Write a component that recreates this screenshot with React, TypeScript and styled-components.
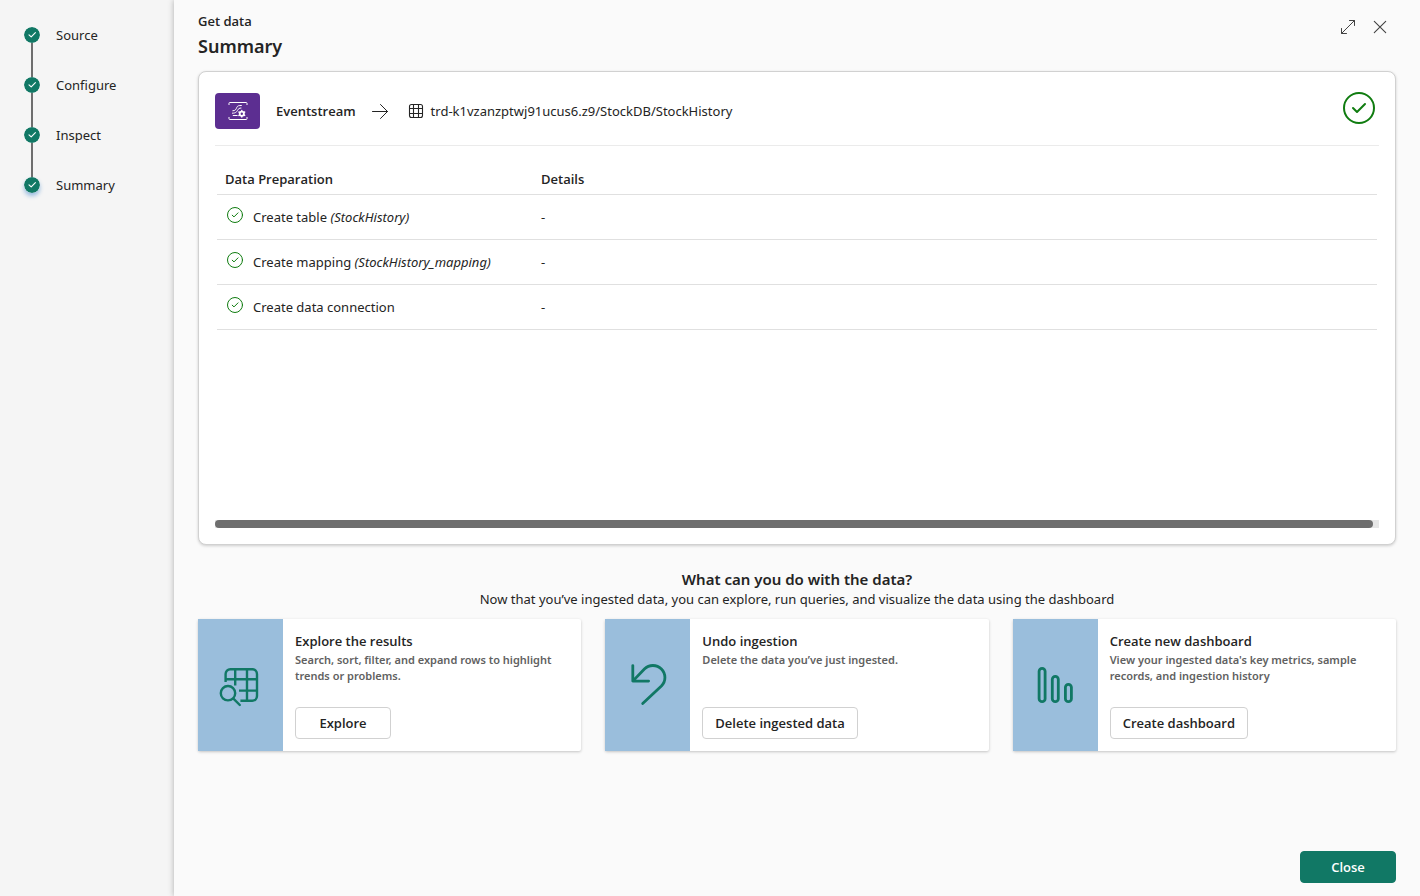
import React from "react";
import styled, { createGlobalStyle } from "styled-components";

const color = {
  text: "#242424",
  muted: "#616161",
  brand: "#117865",
  success: "#107c10",
  line: "#e0e0e0",
  panel: "#9abedc",
};

const bodyFont = `"Noto Sans", "Open Sans", sans-serif`;
const strongFont = `"Open Sans", "Noto Sans", sans-serif`;

const GlobalStyle = createGlobalStyle`
  *, *::before, *::after { box-sizing: border-box; }
  body {
    margin: 0;
    background: #fafafa;
    color: ${color.text};
    font-family: ${bodyFont};
    font-size: 13px;
    line-height: 20px;
  }
  h1, h2, h3, p, ol { margin: 0; padding: 0; }
  svg { display: block; flex: none; fill: none; stroke-linecap: round; stroke-linejoin: round; }
`;

const Page = styled.div`
  display: flex;
  min-height: 100vh;
`;

const Sidebar = styled.nav`
  flex: none;
  width: 174px;
  padding: 25px 24px;
  background: #f5f5f5;
`;

const Steps = styled.ol`
  display: flex;
  flex-direction: column;
  gap: 30px;
  list-style: none;
`;

const Step = styled.li<{ $current?: boolean }>`
  position: relative;
  display: flex;
  align-items: center;
  gap: 16px;

  svg {
    border-radius: 50%;
    box-shadow: ${(p) => (p.$current ? "0 3px 4px rgba(40, 120, 200, 0.45)" : "none")};
  }

  &:not(:last-child)::after {
    content: "";
    position: absolute;
    top: 18px;
    left: 7px;
    width: 2px;
    height: 34px;
    background: #6e6e6e;
  }
`;

const Main = styled.main`
  flex: 1;
  min-width: 0;
  display: flex;
  flex-direction: column;
  padding: 11px 24px 13px;
  background: #fafafa;
  box-shadow: 0 0 6px rgba(0, 0, 0, 0.3);
`;

const Header = styled.header`
  display: flex;
  justify-content: space-between;
  align-items: flex-start;
  height: 60px;
`;

const Eyebrow = styled.p`
  font-family: ${strongFont};
  font-weight: 600;
`;

const Title = styled.h1`
  font-size: 18px;
  line-height: 30px;
  font-weight: 600;
`;

const HeaderActions = styled.div`
  display: flex;
`;

const IconButton = styled.button`
  display: grid;
  place-items: center;
  width: 32px;
  height: 32px;
  padding: 0;
  border: 0;
  background: none;
  color: #424242;
`;

const SummaryCard = styled.section`
  padding: 20px 16px 16px;
  border: 1px solid #d1d1d1;
  border-radius: 8px;
  background: #fff;
  box-shadow: 0 1px 3px rgba(0, 0, 0, 0.18);
`;

const FlowRow = styled.div`
  display: flex;
  justify-content: space-between;
  padding-bottom: 15px;
  border-bottom: 1px solid #ebebeb;
`;

const Flow = styled.div`
  display: flex;
  align-items: center;
  gap: 16px;
  height: 38px;
`;

const SourceBadge = styled.div`
  display: grid;
  place-items: center;
  width: 45px;
  height: 36px;
  border-radius: 4px;
  background: #5c2e91;
`;

const SourceName = styled.span`
  font-family: ${strongFont};
  font-weight: 600;
`;

const StatusIcon = styled.div`
  padding-right: 4px;
`;

const Destination = styled.span`
  display: flex;
  align-items: center;
  gap: 7px;
`;

const TableArea = styled.div`
  min-height: 374px;
  padding: 18px 2px 0;
`;

const Table = styled.table`
  width: 100%;
  table-layout: fixed;
  border-collapse: separate;
  border-spacing: 0;
`;

const HeadCell = styled.th<{ $width?: number }>`
  width: ${(p) => (p.$width ? `${p.$width}px` : "auto")};
  padding: 5px 8px;
  border-bottom: 1px solid ${color.line};
  font-family: ${strongFont};
  font-weight: 600;
  text-align: left;
`;

const Cell = styled.td`
  padding: 12px 8px;
  border-bottom: 1px solid ${color.line};
`;

const Task = styled.div`
  display: flex;
  align-items: flex-start;
  gap: 10px;
  padding-left: 2px;
`;

const ScrollTrack = styled.div`
  height: 8px;
  padding-right: 6px;
  background: #e6e6e6;
`;

const ScrollThumb = styled.div`
  height: 8px;
  border-radius: 4px;
  background: #6e6e6e;
`;

const NextSteps = styled.section`
  padding-top: 24px;
  text-align: center;
`;

const NextTitle = styled.h2`
  font-size: 15px;
  line-height: 20px;
  font-weight: 600;
`;

const CardGrid = styled.div`
  display: grid;
  grid-template-columns: repeat(3, 1fr);
  gap: 24px;
  margin-top: 10px;
  text-align: left;
`;

const ActionCard = styled.article`
  display: flex;
  min-height: 132px;
  border-radius: 2px;
  background: #fff;
  box-shadow: 0 1px 3px rgba(0, 0, 0, 0.22);
`;

const CardArt = styled.div`
  flex: none;
  display: grid;
  place-items: center;
  width: 85px;
  background: ${color.panel};
  color: ${color.brand};
`;

const CardBody = styled.div`
  flex: 1;
  display: flex;
  flex-direction: column;
  align-items: flex-start;
  padding: 12px;
`;

const CardTitle = styled.h3`
  font-family: ${strongFont};
  font-size: 13px;
  line-height: 20px;
  font-weight: 600;
`;

const CardText = styled.p`
  margin: 1px 0 auto;
  color: ${color.muted};
  font-size: 11px;
  line-height: 16px;
  font-weight: 600;
`;

const Button = styled.button<{ $primary?: boolean }>`
  min-width: 96px;
  height: 32px;
  padding: 0 12px;
  border: 1px solid ${(p) => (p.$primary ? color.brand : "#d1d1d1")};
  border-radius: 4px;
  background: ${(p) => (p.$primary ? color.brand : "#fff")};
  color: ${(p) => (p.$primary ? "#fff" : color.text)};
  font: 600 13px/20px ${strongFont};
`;

const Footer = styled.footer`
  display: flex;
  justify-content: flex-end;
  margin-top: auto;
`;

const StepIcon = () => (
  <svg width="16" height="16" viewBox="0 0 16 16" aria-hidden="true">
    <circle cx="8" cy="8" r="8" fill={color.brand} />
    <path d="M5 7.8l2.2 2.1 4.2-4.2" stroke="#fff" strokeWidth="1.1" />
  </svg>
);

const TaskIcon = () => (
  <svg width="16" height="16" viewBox="0 0 16 16" stroke={color.success} aria-hidden="true">
    <circle cx="8" cy="8" r="7.5" />
    <path d="M5.2 8.2l1.8 1.7 4-4" />
  </svg>
);

const DoneIcon = () => (
  <svg width="32" height="32" viewBox="0 0 32 32" stroke={color.success} strokeWidth="2" role="img" aria-label="Completed">
    <circle cx="16" cy="16" r="15" />
    <path d="M10 16l4 4 8-8" />
  </svg>
);

const ExpandIcon = () => (
  <svg width="20" height="20" viewBox="0 0 20 20" stroke="currentColor" aria-hidden="true">
    <path d="M3.5 16.5l13-13M11.5 3.5h5v5M3.5 11.5v5h5" />
  </svg>
);

const DismissIcon = () => (
  <svg width="20" height="20" viewBox="0 0 20 20" stroke="currentColor" strokeWidth="1.1" aria-hidden="true">
    <path d="M4.3 4.3l11.4 11.4M15.7 4.3L4.3 15.7" />
  </svg>
);

const EventstreamIcon = () => (
  <svg width="20" height="20" viewBox="0 0 20 20" stroke="#fff" aria-hidden="true">
    <path d="M1 3.6V2.2c0-.4.3-.7.7-.7h16.6c.4 0 .7.3.7.7v1.4M1 16.4v1.4c0 .4.3.7.7.7h16.6c.4 0 .7-.3.7-.7v-1.4" />
    <path d="M4.8 9.8c2.8 0 3.2-1.6 4-3.4S10.8 4.5 13.4 4.5M4.4 12.2c3.8 0 4.4-1.6 5.2-3S11.2 7 13 7M5.2 14.5h4" />
    <circle cx="13.8" cy="12.7" r="2.1" strokeWidth="1.8" />
    <path d="M13.8 9.4v.6M13.8 15.4v.6M10.9 11l.6.3M16.1 14.1l.6.3M10.9 14.4l.6-.3M16.1 11.3l.6-.3" strokeWidth="1.4" />
  </svg>
);

const ArrowIcon = () => (
  <svg width="20" height="20" viewBox="0 0 20 20" stroke={color.text} aria-hidden="true">
    <path d="M.5 10.5h15M8.5 3.5l7 7-7 7" />
  </svg>
);

const TableIcon = () => (
  <svg width="16" height="16" viewBox="0 0 16 16" stroke={color.text} strokeWidth="1.1" aria-hidden="true">
    <rect x="1.5" y="1.5" width="13" height="13" rx="2" />
    <path d="M1.5 5.5h13M1.5 10.5h13M5.5 1.5v13M10.5 1.5v13" />
  </svg>
);

const ExploreIcon = () => (
  <svg width="48" height="48" viewBox="0 0 48 48" stroke="currentColor" strokeWidth="2.4" aria-hidden="true">
    <g strokeLinecap="butt">
      <path d="M8.6 21v-8a4.7 4.7 0 0 1 4.7-4.7h22a4.7 4.7 0 0 1 4.7 4.7v22a4.7 4.7 0 0 1-4.7 4.7H23.4" />
      <path d="M8.6 18.2h31.4M22 29.6h18M18.2 8.3v16.2M30 8.3v31.4" />
    </g>
    <circle cx="11" cy="32.2" r="7.2" />
    <path d="M16.4 37.6l6.4 6.4" />
  </svg>
);

const UndoIcon = () => (
  <svg width="48" height="48" viewBox="0 0 48 48" stroke="currentColor" strokeWidth="2.8" aria-hidden="true">
    <path d="M8.8 4.6v15.5h15.8M8.8 20.1L20.4 8a12 12 0 0 1 17 17L18.7 42.6" />
  </svg>
);

const DashboardIcon = () => (
  <svg width="48" height="48" viewBox="0 0 48 48" stroke="currentColor" strokeWidth="2.8" aria-hidden="true">
    <rect x="8.1" y="7.3" width="6" height="33.4" rx="3" />
    <rect x="21.3" y="15.3" width="6" height="25.4" rx="3" />
    <rect x="34.4" y="23.3" width="6" height="17.4" rx="3" />
  </svg>
);

const steps = ["Source", "Configure", "Inspect", "Summary"];

const tasks = [
  { name: "Create table", target: "(StockHistory)" },
  { name: "Create mapping", target: "(StockHistory_mapping)" },
  { name: "Create data connection", target: "" },
];

const actions = [
  {
    icon: <ExploreIcon />,
    title: "Explore the results",
    text: "Search, sort, filter, and expand rows to highlight trends or problems.",
    button: "Explore",
  },
  {
    icon: <UndoIcon />,
    title: "Undo ingestion",
    text: "Delete the data you’ve just ingested.",
    button: "Delete ingested data",
  },
  {
    icon: <DashboardIcon />,
    title: "Create new dashboard",
    text: "View your ingested data's key metrics, sample records, and ingestion history",
    button: "Create dashboard",
  },
];

export default function App() {
  return (
    <>
      <GlobalStyle />
      <Page>
        <Sidebar aria-label="Progress">
          <Steps>
            {steps.map((step, i) => (
              <Step key={step} $current={i === steps.length - 1}>
                <StepIcon />
                {step}
              </Step>
            ))}
          </Steps>
        </Sidebar>
        <Main>
          <Header>
            <div>
              <Eyebrow>Get data</Eyebrow>
              <Title>Summary</Title>
            </div>
            <HeaderActions>
              <IconButton type="button" aria-label="Expand">
                <ExpandIcon />
              </IconButton>
              <IconButton type="button" aria-label="Dismiss">
                <DismissIcon />
              </IconButton>
            </HeaderActions>
          </Header>

          <SummaryCard>
            <FlowRow>
              <Flow>
                <SourceBadge>
                  <EventstreamIcon />
                </SourceBadge>
                <SourceName>Eventstream</SourceName>
                <ArrowIcon />
                <Destination>
                  <TableIcon />
                  trd-k1vzanzptwj91ucus6.z9/StockDB/StockHistory
                </Destination>
              </Flow>
              <StatusIcon>
                <DoneIcon />
              </StatusIcon>
            </FlowRow>
            <TableArea>
              <Table>
                <thead>
                  <tr>
                    <HeadCell $width={316}>Data Preparation</HeadCell>
                    <HeadCell>Details</HeadCell>
                  </tr>
                </thead>
                <tbody>
                  {tasks.map((task) => (
                    <tr key={task.name}>
                      <Cell>
                        <Task>
                          <TaskIcon />
                          <span>
                            {task.name} <em>{task.target}</em>
                          </span>
                        </Task>
                      </Cell>
                      <Cell>-</Cell>
                    </tr>
                  ))}
                </tbody>
              </Table>
            </TableArea>
            <ScrollTrack>
              <ScrollThumb />
            </ScrollTrack>
          </SummaryCard>

          <NextSteps>
            <NextTitle>What can you do with the data?</NextTitle>
            <p>Now that you’ve ingested data, you can explore, run queries, and visualize the data using the dashboard</p>
            <CardGrid>
              {actions.map((action) => (
                <ActionCard key={action.title}>
                  <CardArt>{action.icon}</CardArt>
                  <CardBody>
                    <CardTitle>{action.title}</CardTitle>
                    <CardText>{action.text}</CardText>
                    <Button type="button">{action.button}</Button>
                  </CardBody>
                </ActionCard>
              ))}
            </CardGrid>
          </NextSteps>

          <Footer>
            <Button type="button" $primary>
              Close
            </Button>
          </Footer>
        </Main>
      </Page>
    </>
  );
}
